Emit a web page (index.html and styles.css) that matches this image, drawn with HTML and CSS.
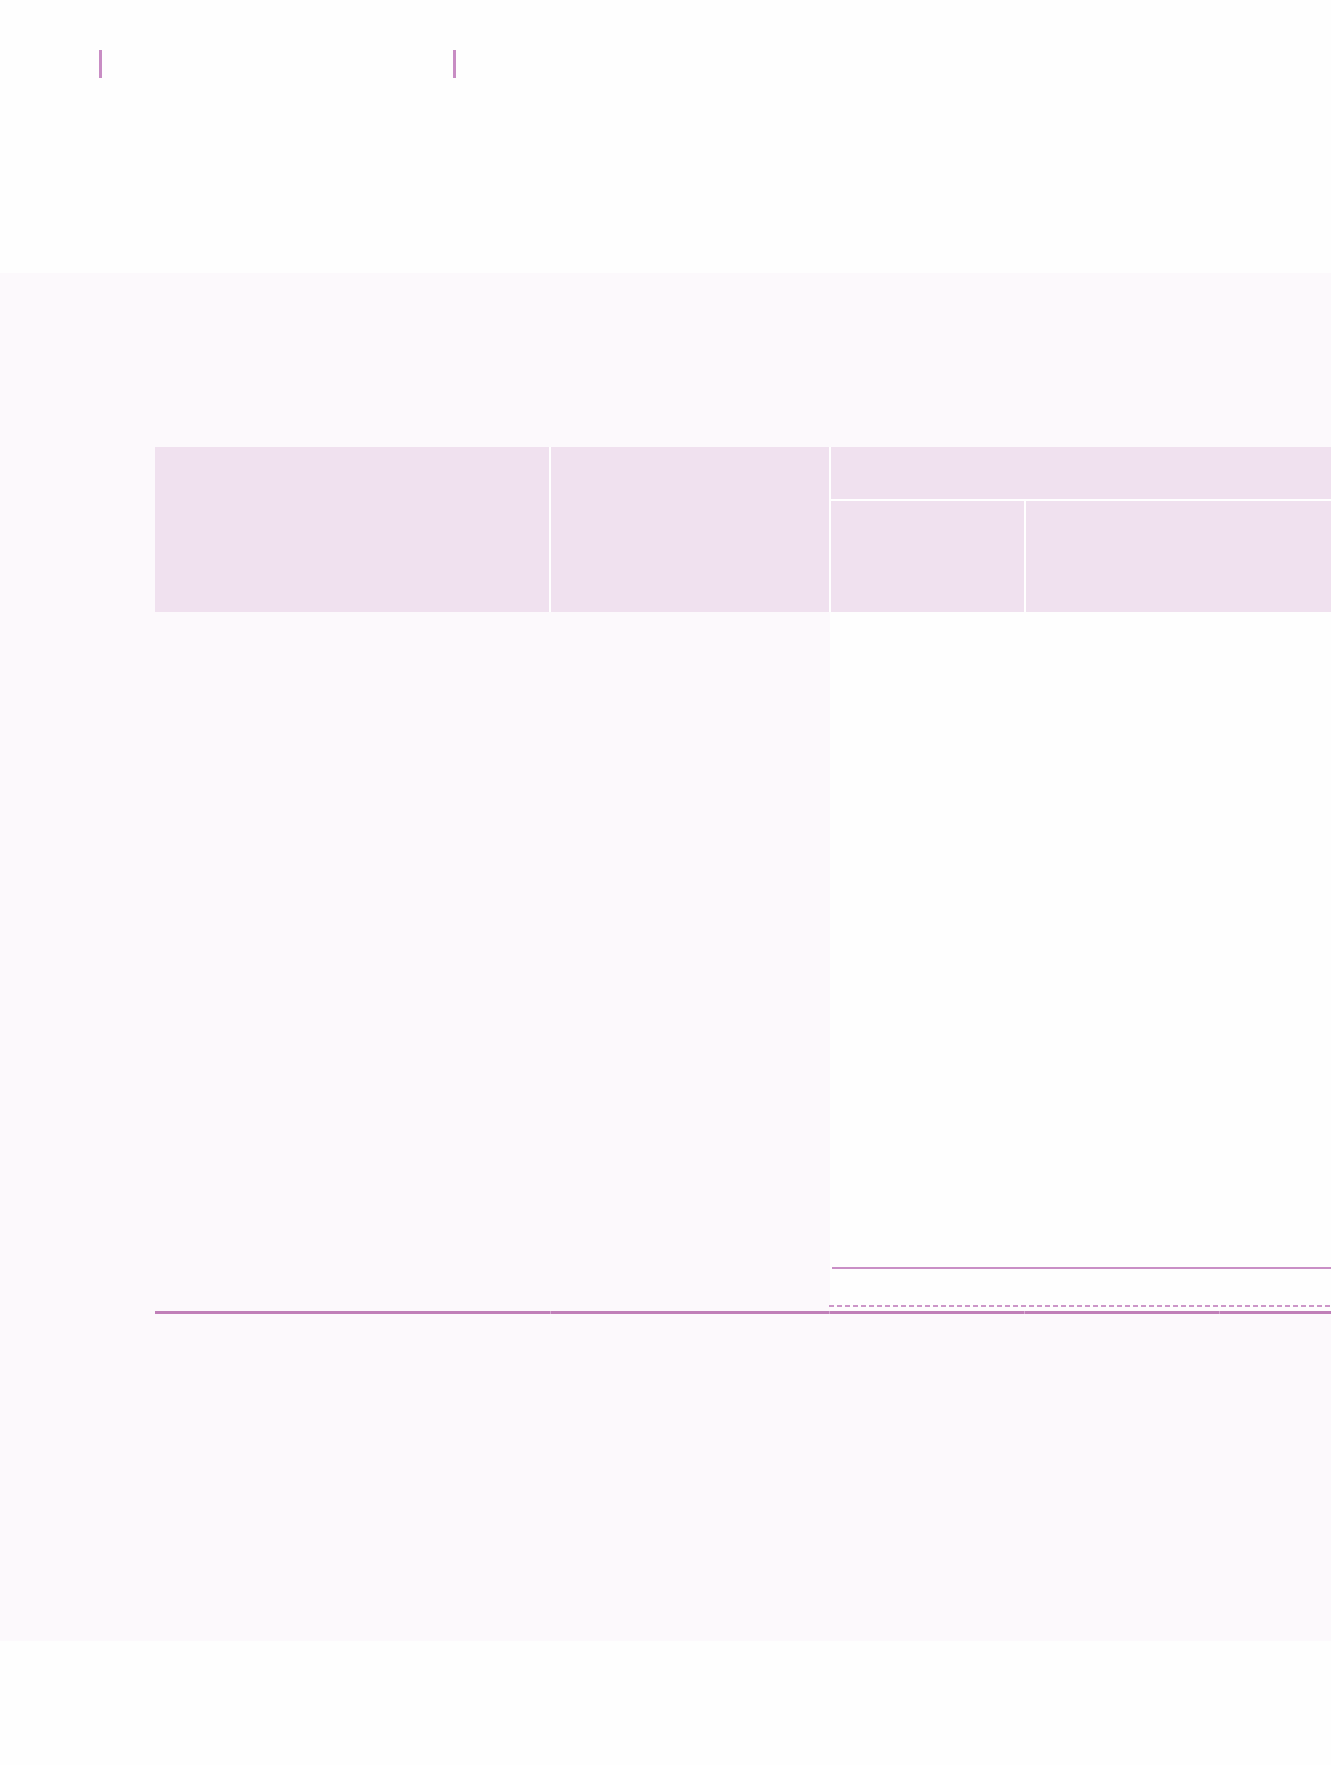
FILE: index.html
```html
<!DOCTYPE html>
<html lang="en">
<head>
<meta charset="utf-8">
<title>Table</title>
<link rel="stylesheet" href="styles.css">
</head>
<body>
<header class="top">
  <div class="mark mark-a"></div>
  <div class="mark mark-b"></div>
</header>
<section class="band">
  <div class="table">
    <div class="thead">
      <div class="th th-a"></div>
      <div class="th th-b"></div>
      <div class="th th-group"></div>
      <div class="th th-d"></div>
      <div class="th th-e"></div>
    </div>
    <div class="tbody">
      <div class="tb-left"></div>
      <div class="tb-right">
        <div class="rule-solid"></div>
        <div class="rule-dash"></div>
      </div>
    </div>
    <div class="tfoot">
      <div class="tf"></div>
      <div class="tf"></div>
      <div class="tf"></div>
      <div class="tf"></div>
      <div class="tf"></div>
    </div>
  </div>
</section>
<footer class="bottom"></footer>
</body>
</html>
```

FILE: styles.css
```css
html, body {
  margin: 0;
  padding: 0;
  background: #fefefe;
  font-family: "Liberation Sans", Arial, sans-serif;
}

.top {
  height: 273px;
  box-sizing: border-box;
  padding: 50px 0 0 99px;
  display: flex;
  align-items: flex-start;
}

.mark {
  width: 3px;
  height: 28px;
  background: #c88dc4;
}

.mark-b {
  margin-left: 351px;
}

.band {
  background: #fcf9fc;
  height: 1368px;
  box-sizing: border-box;
  padding: 174px 0 0 155px;
}

.table {
  display: flex;
  flex-direction: column;
}

.thead {
  display: grid;
  grid-template-columns: 394px 278px 193px 1fr;
  grid-template-rows: 52px 111px;
  gap: 2px;
  background: #ffffff;
}

.th {
  background: #f0e1ef;
}

.th-a {
  grid-column: 1;
  grid-row: 1 / 3;
}

.th-b {
  grid-column: 2;
  grid-row: 1 / 3;
}

.th-group {
  grid-column: 3 / 5;
  grid-row: 1;
}

.th-d {
  grid-column: 3;
  grid-row: 2;
}

.th-e {
  grid-column: 4;
  grid-row: 2;
}

.tbody {
  display: flex;
  height: 699px;
}

.tb-left {
  width: 675px;
}

.tb-right {
  flex: 1;
  background: #fefefe;
  display: flex;
  flex-direction: column;
  justify-content: flex-end;
  padding-bottom: 4px;
}

.rule-solid {
  height: 2px;
  margin-left: 2px;
  background: #c98fc6;
  margin-bottom: 36px;
}

.rule-dash {
  height: 2px;
  margin-left: -1px;
  background: repeating-linear-gradient(90deg, #cc96c8 0 5px, transparent 5px 8px);
}

.tfoot {
  display: grid;
  grid-template-columns: 395px 278px 194px 194px 1fr;
  column-gap: 1px;
  height: 3px;
  background: #d7aad2;
}

.tf {
  background: #c07fb8;
}

.bottom {
  height: 124px;
}
```
